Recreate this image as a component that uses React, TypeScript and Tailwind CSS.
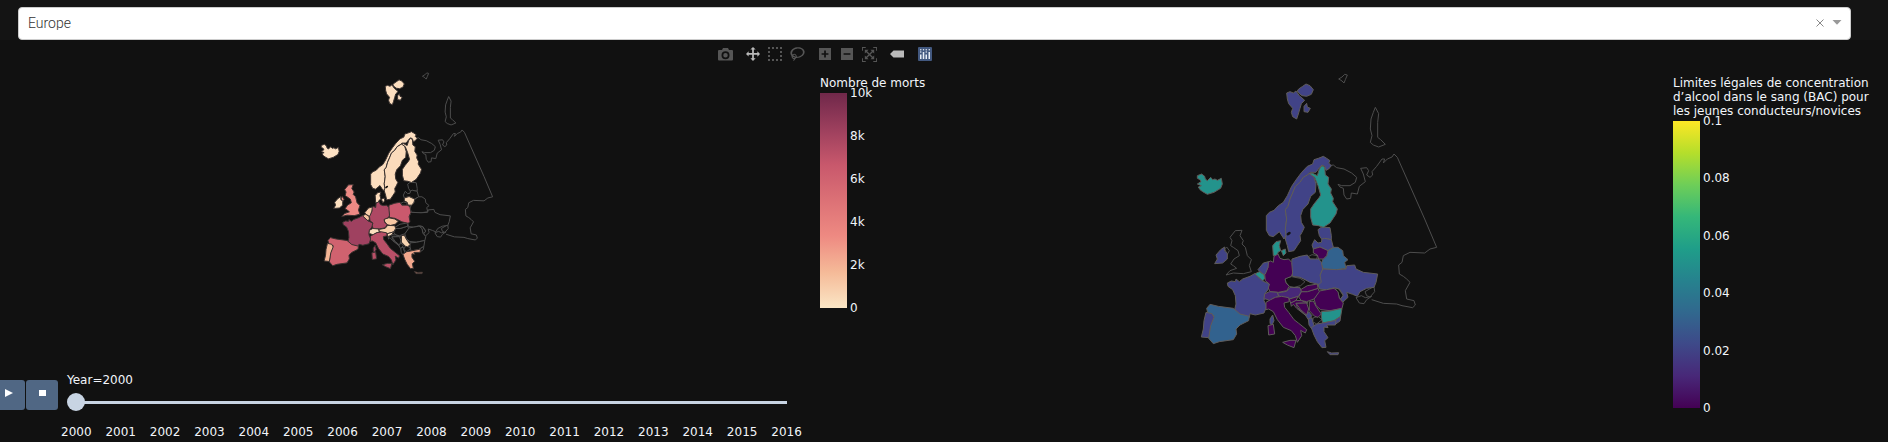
import React, { useState } from "react";

type Country = { id: string; d: string[] };

// Outlines on a shared 750 x 900 projection grid.
const countries: Country[] = [
  { id: "franzJosef", d: ["446,30 456,24 464,16 472,18 466,32 462,42 456,36 450,32"] },
  { id: "novaya", d: ["556,115 566,134 563,160 563,205 572,212 586,226 566,234 550,228 541,220 546,200 541,180 543,150 550,130"] },
  { id: "kaliningrad", d: ["356,562 366,557 382,560 380,572 360,570"] },
  { id: "crimea", d: ["498,686 514,680 526,686 545,682 530,692 522,704 508,702", "525,668 552,652 554,668 540,684 530,680"] },
  { id: "moldova", d: ["434,656 446,660 460,680 450,690 444,672"] },
  { id: "macedonia", d: ["370,746 384,742 396,752 380,765 368,758"] },
  { id: "montenegro", d: ["346,738 356,728 366,740 355,752"] },
  { id: "albania", d: ["355,750 366,746 368,758 374,772 364,778 357,768"] },
  { id: "turkey", d: ["428,758 452,742 450,756 436,766"] },
  { id: "uk", d: ["136,485 156,484 150,500 160,515 156,525 166,535 172,560 184,572 178,590 184,608 160,614 130,612 108,618 120,605 140,598 130,590 122,585 132,570 148,560 144,545 130,535 122,530 126,515 120,505 128,495", "104,540 110,534 118,545 112,556"] },
  { id: "estonia", d: ["384,482 395,474 420,476 424,500 424,512 404,508 396,512 388,500"] },
  { id: "latvia", d: ["366,528 374,512 384,522 394,520 396,510 404,508 424,512 430,535 414,545 390,534 370,540"] },
  { id: "belarus", d: ["414,545 430,535 444,535 458,545 460,560 474,572 464,580 468,598 440,602 400,600 394,585 398,572 410,560"] },
  { id: "ukraine", d: ["390,618 398,600 440,602 468,600 470,590 494,588 498,600 520,610 563,615 558,640 552,655 530,658 510,668 502,682 488,676 470,670 474,685 458,700 452,690 460,678 448,660 434,656 410,662 388,660 384,645"] },
  { id: "romania", d: ["372,690 388,666 410,662 432,658 444,668 448,688 460,702 456,718 420,725 392,722 378,710"] },
  { id: "bulgaria", d: ["394,728 420,726 456,718 452,742 430,756 398,762 394,745"] },
  { id: "hungary", d: ["326,684 334,668 352,668 384,658 388,668 372,690 350,698 334,695"] },
  { id: "slovakia", d: ["332,662 352,650 382,645 384,658 352,668 334,668"] },
  { id: "croatia", d: ["302,702 318,694 334,695 354,702 318,703 322,715 348,740 320,718 310,706 304,712"] },
  { id: "bosnia", d: ["318,703 350,702 356,720 350,738 332,722"] },
  { id: "iceland", d: ["22,320 35,315 44,322 46,330 52,335 62,325 68,332 75,330 82,334 94,328 97,345 92,358 72,370 52,376 38,368 30,362 25,354 34,350 22,345 33,338 30,332 22,328"] },
  {
    id: "norway",
    d: [
      "229,440 238,430 252,424 265,410 280,400 292,380 305,352 320,330 335,310 352,292 368,285 372,272 385,268 400,262 410,268 420,275 416,282 424,290 416,300 408,304 404,292 396,288 388,296 378,310 360,310 352,318 340,325 330,340 316,352 308,372 300,390 294,412 286,422 290,450 286,480 288,500 282,510 268,488 250,503 238,500 229,484",
      "290,72 300,68 310,72 318,66 328,80 344,94 334,104 330,118 325,135 320,150 308,143 304,130 308,118 296,104 292,90",
      "326,60 338,52 348,45 360,50 370,62 364,76 350,82 336,80 326,72 322,66",
      "342,112 350,103 352,114 361,118 354,130 342,128",
    ],
  },
  { id: "sweden", d: ["286,422 294,412 300,390 308,372 316,352 330,340 340,325 352,318 360,312 372,325 378,345 376,370 362,382 354,405 338,422 332,440 334,460 343,475 336,490 330,500 332,515 322,530 312,545 296,548 292,530 286,510 288,500 286,480 290,450"] },
  { id: "finland", d: ["396,290 404,295 406,318 416,325 414,345 424,360 422,372 430,388 428,398 442,420 438,435 420,462 400,475 385,470 368,468 362,445 362,420 372,405 388,385 392,378 384,350 374,325 358,314 366,312 382,320 388,300"] },
  { id: "denmark", d: ["250,560 248,530 258,518 272,515 268,530 272,545 264,550 262,560", "274,545 286,540 288,552 280,560"] },
  { id: "lithuania", d: ["370,540 390,534 414,545 410,560 400,570 386,570 382,558 370,552"] },
  { id: "ireland", d: ["92,542 104,534 104,546 112,554 112,570 98,582 74,584 82,570 78,558"] },
  { id: "poland", d: ["306,570 330,562 352,558 360,570 386,570 394,580 398,600 390,618 394,640 386,646 360,640 345,632 330,625 308,622 304,592"] },
  { id: "czechia", d: ["285,628 305,623 330,628 345,638 332,650 312,655 298,652 288,640"] },
  { id: "germany", d: ["252,562 264,555 270,568 282,572 296,570 305,580 308,612 304,622 285,630 288,642 298,652 290,665 265,670 240,668 234,655 238,645 226,635 224,615 234,595 232,580 242,576 250,580"] },
  { id: "netherlands", d: ["204,602 220,582 236,578 234,595 226,615 222,617 210,608"] },
  { id: "belgium", d: ["194,615 208,608 222,617 224,628 218,636"] },
  { id: "france", d: ["112,642 124,636 136,638 138,630 148,638 158,630 180,622 194,614 218,636 238,645 234,662 224,675 222,695 230,712 222,732 196,738 180,734 178,745 150,738 132,730 138,705 136,680 128,662 114,652", "240,750 248,738 252,755 246,768 240,764"] },
  { id: "spain", d: ["50,718 60,706 85,712 130,718 150,735 178,742 176,755 150,768 138,780 140,795 130,812 88,818 70,824 56,808 60,770 72,740 54,735"] },
  { id: "portugal", d: ["48,730 66,734 72,745 62,770 56,806 34,804 40,780 42,755"] },
  { id: "switzerland", d: ["224,675 238,668 262,670 266,682 250,688 240,695 228,690 222,690"] },
  { id: "austria", d: ["262,672 290,667 300,655 330,656 334,668 325,682 300,690 268,682"] },
  { id: "slovenia", d: ["298,690 325,682 318,694 302,702"] },
  { id: "serbia", d: ["358,698 370,696 378,712 394,735 384,745 374,742 358,725"] },
  { id: "italy", d: ["228,700 242,692 256,685 275,682 296,686 298,698 282,702 284,715 296,730 312,752 325,762 350,782 346,792 332,784 335,800 322,820 316,800 304,785 280,775 262,752 250,728 236,720 228,722", "278,820 300,814 318,814 312,836 292,828", "234,770 250,766 254,795 236,798"] },
  { id: "greece", d: ["364,776 380,765 398,762 438,754 436,768 410,768 414,776 402,774 402,788 414,806 404,815 408,835 396,836 382,818 372,798", "412,848 425,852 446,851 444,857 420,857"] },
];

const russia =
  "418,290 430,288 440,296 462,300 485,312 500,325 496,340 480,350 455,350 444,346 450,354 460,358 462,378 470,390 482,388 484,372 502,375 508,352 526,338 520,315 512,298 530,296 536,305 530,318 540,325 548,318 546,308 560,292 576,270 584,270 580,282 592,270 606,264 612,255 622,265 704,450 740,535 720,540 704,552 660,550 640,560 636,580 626,588 628,615 640,622 650,630 660,640 646,665 650,690 672,695 676,708 668,716 636,710 620,705 580,703 545,692";

const deaths: Record<string, string> = {
  iceland: "#fde1c3",
  norway: "#fcdebf",
  sweden: "#fbdbbb",
  finland: "#fcddbd",
  denmark: "#fcdcbc",
  lithuania: "#fbd8b5",
  ireland: "#fde0c0",
  slovenia: "#fbdfc0",
  serbia: "#f9d5b2",
  switzerland: "#fbe0bf",
  austria: "#f8d0ab",
  czechia: "#f7c8a3",
  netherlands: "#f8cca8",
  belgium: "#f6c19c",
  portugal: "#f5b696",
  greece: "#f2a78c",
  uk: "#ec8984",
  spain: "#d0626f",
  poland: "#ca596d",
  italy: "#b94f67",
  germany: "#ae4864",
  france: "#9f4160",
};

const limits: Record<string, string> = {
  iceland: "#23938c",
  finland: "#23938c",
  denmark: "#23938c",
  belgium: "#23938c",
  bulgaria: "#23938c",
  spain: "#32628e",
  belarus: "#32628e",
  norway: "#414387",
  sweden: "#414387",
  ireland: "#414387",
  france: "#414387",
  netherlands: "#414387",
  portugal: "#414387",
  poland: "#414387",
  ukraine: "#414387",
  estonia: "#414387",
  latvia: "#414387",
  greece: "#414387",
  turkey: "#414387",
  montenegro: "#414387",
  albania: "#414387",
  switzerland: "#482878",
  austria: "#482878",
  germany: "#440154",
  lithuania: "#440154",
  slovakia: "#440154",
  hungary: "#440154",
  slovenia: "#440154",
  croatia: "#440154",
  bosnia: "#440154",
  serbia: "#440154",
  romania: "#440154",
  italy: "#440154",
};

function EuropeMap({ fills, edge, className, label }: { fills: Record<string, string>; edge: string; className: string; label: string }) {
  const ordered = [...countries].sort((a, b) => Number(a.id in fills) - Number(b.id in fills));
  return (
    <svg viewBox="0 0 750 900" className={className} role="img" aria-label={label}>
      <polyline points={russia} fill="none" stroke="#4d4d4d" strokeWidth={1} vectorEffect="non-scaling-stroke" />
      {ordered.map((c) =>
        c.d.map((points, i) => (
          <polygon
            key={c.id + i}
            points={points}
            fill={fills[c.id] ?? "#111111"}
            stroke={c.id in fills ? edge : "#4d4d4d"}
            strokeWidth={1}
            strokeLinejoin="round"
            vectorEffect="non-scaling-stroke"
          />
        ))
      )}
      <ellipse cx="296" cy="494" rx="7" ry="4" transform="rotate(-35 296 494)" fill="#111111" />
    </svg>
  );
}

function ColorScale({ title, labels, barClass, ticksClass }: { title: string[]; labels: string[]; barClass: string; ticksClass: string }) {
  return (
    <div className="pt-9">
      <div className="whitespace-nowrap pb-[3px]">
        {title.map((line) => (
          <div key={line}>{line}</div>
        ))}
      </div>
      <div className="flex gap-[3px]">
        <div className={barClass} />
        <div className={ticksClass}>
          {labels.map((l) => (
            <span key={l}>{l}</span>
          ))}
        </div>
      </div>
    </div>
  );
}

const glyphs = {
  pan: "m1000 350l-187 188 0-125-250 0 0 250 125 0-188 187-187-187 125 0 0-250-250 0 0 125-188-188 186-187 0 125 252 0 0-250-125 0 187-188 188 188-125 0 0 250 250 0 0-126 187 188z",
  select:
    "m0 850l0-143 143 0 0 143-143 0z m286 0l0-143 143 0 0 143-143 0z m285 0l0-143 143 0 0 143-143 0z m286 0l0-143 143 0 0 143-143 0z m-857-286l0-143 143 0 0 143-143 0z m857 0l0-143 143 0 0 143-143 0z m-857-285l0-143 143 0 0 143-143 0z m857 0l0-143 143 0 0 143-143 0z m-857-286l0-143 143 0 0 143-143 0z m286 0l0-143 143 0 0 143-143 0z m285 0l0-143 143 0 0 143-143 0z m286 0l0-143 143 0 0 143-143 0z",
  lasso:
    "m1018 538c-36 207-290 336-568 286-277-48-473-256-436-463 10-57 36-108 76-151-13-66 11-137 68-183 34-28 75-41 114-42l-55-70 0 0c-2-1-3-2-4-3-10-14-8-34 5-45 14-11 34-8 45 4 1 1 2 3 2 5l0 0 113 140c16 11 31 24 45 40 4 3 6 7 8 11 48-3 100 0 151 9 278 48 473 255 436 462z m-624-379c-80 14-149 48-197 96 42 42 109 47 156 9 33-26 47-66 41-105z m-187-74c-19 16-33 37-39 60 50-32 109-55 174-68-42-25-95-24-135 8z m360 75c-34-7-69-9-102-8 8 62-16 128-68 170-73 59-175 54-244-5-9 20-16 40-20 61-28 159 121 317 333 354s407-60 434-217c28-159-121-318-333-355z",
  plus: "m1 787l0-875 875 0 0 875-875 0z m687-500l-187 0 0-187-125 0 0 187-188 0 0 125 188 0 0 187 125 0 0-187 187 0 0-125z",
  minus: "m0 788l0-876 876 0 0 876-876 0z m688-500l-500 0 0 125 500 0 0-125z",
  reset:
    "m250 850l-187 0-63 0 0-62 0-188 63 0 0 188 187 0 0 62z m688 0l-188 0 0-62 188 0 0-188 62 0 0 188 0 62-62 0z m-875-938l0 188-63 0 0-188 0-62 63 0 187 0 0 62-187 0z m875 188l0-188-188 0 0-62 188 0 62 0 0 62 0 188-62 0z m-125 188l-1 0-93-94-156 156 156 156 92-93 2 0 0 250-250 0 0-2 93-92-156-156-156 156 94 92 0 2-250 0 0-250 0 0 93 93 157-156-157-156-93 94 0 0 0-250 250 0 0 0-94 93 156 157 156-157-93-93 0 0 250 0 0 250z",
  tag: "m375 725l0 0-375-375 375-374 0-1 1125 0 0 750-1125 0z",
};

function ModeButton({ label, active, children }: { label: string; active?: boolean; children: React.ReactNode }) {
  return (
    <button aria-label={label} className={`flex h-5 w-[22px] items-center justify-center ${active ? "text-[#bababa]" : "text-[#565656]"}`}>
      {children}
    </button>
  );
}

function Glyph({ d, box, className }: { d: string; box: string; className: string }) {
  return (
    <svg viewBox={box} className={className} fill="currentColor" aria-hidden="true">
      <path transform="matrix(1 0 0 -1 0 850)" fillRule="evenodd" d={d} />
    </svg>
  );
}

function ModeBar() {
  return (
    <div className="flex h-5 gap-1.5">
      <ModeButton label="Download plot as a png">
        <svg viewBox="0 0 30 26" className="h-[13px] w-[15px]" fill="currentColor" aria-hidden="true">
          <path fillRule="evenodd" d="M2 4H8L10 0H20L22 4H28Q30 4 30 6V23Q30 25 28 25H2Q0 25 0 23V6Q0 4 2 4ZM15 6.500A8 8 0 1 0 15 22.500A8 8 0 1 0 15 6.500ZM15 10A4.500 4.500 0 1 1 15 19A4.500 4.500 0 1 1 15 10Z" />
        </svg>
      </ModeButton>
      <div className="flex">
        <ModeButton label="Pan" active>
          <Glyph d={glyphs.pan} box="0 0 1000 1000" className="size-[14px]" />
        </ModeButton>
        <ModeButton label="Box Select">
          <Glyph d={glyphs.select} box="0 0 1000 1000" className="size-[14px]" />
        </ModeButton>
        <ModeButton label="Lasso Select">
          <Glyph d={glyphs.lasso} box="0 0 1031 1000" className="h-[14px] w-[15px]" />
        </ModeButton>
      </div>
      <div className="flex">
        <ModeButton label="Zoom in">
          <Glyph d={glyphs.plus} box="0 0 875 1000" className="h-[14px] w-[12px]" />
        </ModeButton>
        <ModeButton label="Zoom out">
          <Glyph d={glyphs.minus} box="0 0 875 1000" className="h-[14px] w-[12px]" />
        </ModeButton>
        <ModeButton label="Reset">
          <Glyph d={glyphs.reset} box="0 0 1000 1000" className="size-[15px]" />
        </ModeButton>
      </div>
      <ModeButton label="Toggle show closest data on hover" active>
        <Glyph d={glyphs.tag} box="0 0 1500 1000" className="h-[14px] w-[14px]" />
      </ModeButton>
      <a href="https://plotly.com/" aria-label="Produced with Plotly" className="flex h-5 w-[22px] items-center justify-center">
        <svg viewBox="0 0 28 28" className="size-[14px]" aria-hidden="true">
          <rect width="28" height="28" rx="2" fill="#42587f" />
          <g fill="#e6ecf5">
            <circle cx="5.500" cy="10" r="1.500" />
            <circle cx="5.500" cy="5.500" r="1.500" />
            <circle cx="11" cy="5.500" r="1.500" />
            <circle cx="16.500" cy="10" r="1.500" />
            <circle cx="16.500" cy="5.500" r="1.500" />
            <circle cx="22.500" cy="5.500" r="1.500" />
            <rect x="4" y="15" width="3" height="9" />
            <rect x="9.500" y="10" width="3" height="14" />
            <rect x="15" y="15" width="3" height="9" />
            <rect x="21" y="10" width="3" height="14" />
          </g>
        </svg>
      </a>
    </div>
  );
}

const years = Array.from({ length: 17 }, (_, i) => 2000 + i);

export default function App() {
  const [year, setYear] = useState(2000);
  const [region, setRegion] = useState("Europe");

  return (
    <div className="min-h-screen overflow-hidden bg-[#111111] font-['DejaVu_Sans',sans-serif] text-[12px] leading-[14px] text-[#f2f5fa]">
      <header className="bg-[#141414] pl-[18px] pr-[37px] pt-[7px]">
        <div className="flex h-[33px] items-center rounded border border-[#cccccc] bg-white pr-2">
          <select
            aria-label="Region"
            value={region}
            onChange={(e) => setRegion(e.target.value)}
            className="h-full grow appearance-none bg-transparent pb-px pl-[9px] font-[Roboto,sans-serif] text-[14px] font-light text-[#333333] outline-none"
          >
            <option value="">Select...</option>
            <option value="Europe">Europe</option>
          </select>
          <button aria-label="Clear value" onClick={() => setRegion("")} className="mr-2 pb-px">
            <svg viewBox="0 0 8 8" className="size-2" stroke="#888888" aria-hidden="true">
              <path d="M0.500 0.500L7.500 7.500M7.500 0.500L0.500 7.500" />
            </svg>
          </button>
          <svg viewBox="0 0 10 5" className="mb-0.5 h-[5px] w-[10px]" fill="#999999" aria-hidden="true">
            <path d="M0.500 0H9.500L5 4.800Z" />
          </svg>
        </div>
      </header>

      <main className="grid grid-cols-2">
        <section className="relative">
          <div className="absolute right-2 top-1">
            <ModeBar />
          </div>
          <div className="flex h-[333px]">
            <div className="flex grow justify-center pr-[9px] pt-[29px]">
              <EuropeMap fills={deaths} edge="#3a3230" className="h-[215px] w-[179px]" label="Nombre de morts en Europe" />
            </div>
            <div className="w-[124px] shrink-0">
              <ColorScale
                title={["Nombre de morts"]}
                labels={["10k", "8k", "6k", "4k", "2k", "0"]}
                barClass="h-[215px] w-[27px] bg-[linear-gradient(to_top,#fbe6c5,#f5ba98,#ee8a82,#dc7176,#c8586c,#9c3f5d,#70284a)]"
                ticksClass="-my-[7px] flex flex-col justify-between"
              />
            </div>
          </div>
          <div className="flex pr-[142px]">
            <div className="-ml-[7px] flex gap-px pt-[7px]">
              <button aria-label="Play" className="flex h-[30px] w-8 items-center justify-center rounded-[3px] bg-[#506784]">
                <svg viewBox="0 0 8 8" className="-mt-1 size-2" fill="#ffffff" aria-hidden="true">
                  <path d="M0 0L8 4L0 8Z" />
                </svg>
              </button>
              <button aria-label="Stop" className="flex h-[30px] w-8 items-center justify-center rounded-[3px] bg-[#506784]">
                <svg viewBox="0 0 7 6" className="-mt-1 h-1.5 w-[7px]" fill="#ffffff" aria-hidden="true">
                  <path d="M0 0H7V6H0Z" />
                </svg>
              </button>
            </div>
            <div className="ml-[3px] grow">
              <label htmlFor="year" className="block pl-1.5">
                Year={year}
              </label>
              <div className="relative mx-1.5 mt-1.5 h-[18px]">
                <div className="absolute inset-x-[9px] top-2 h-[3px] bg-[#c8d4e3]" />
                <input
                  id="year"
                  type="range"
                  min={2000}
                  max={2016}
                  value={year}
                  onChange={(e) => setYear(Number(e.target.value))}
                  className="relative block h-[18px] w-full appearance-none bg-transparent [&::-webkit-slider-thumb]:size-[18px] [&::-webkit-slider-thumb]:appearance-none [&::-webkit-slider-thumb]:rounded-full [&::-webkit-slider-thumb]:bg-[#c8d4e3]"
                />
              </div>
              <div className="mt-3.5 flex justify-between">
                {years.map((y) => (
                  <span key={y}>{y}</span>
                ))}
              </div>
            </div>
          </div>
        </section>

        <section className="flex">
          <div className="flex grow justify-center pl-[13px] pt-[29px]">
            <EuropeMap fills={limits} edge="#5f5c5a" className="h-[300px] w-[250px]" label="Limites légales de concentration d’alcool dans le sang" />
          </div>
          <div className="w-[215px] shrink-0">
            <ColorScale
              title={["Limites légales de concentration", "d’alcool dans le sang (BAC) pour", "les jeunes conducteurs/novices"]}
              labels={["0.1", "0.08", "0.06", "0.04", "0.02", "0"]}
              barClass="h-[287px] w-[27px] bg-[linear-gradient(to_top,#440154,#482878,#3e4989,#31688e,#26828e,#1f9e89,#35b779,#6ece58,#b5de2b,#fde725)]"
              ticksClass="-my-[7px] flex flex-col justify-between"
            />
          </div>
        </section>
      </main>
    </div>
  );
}
